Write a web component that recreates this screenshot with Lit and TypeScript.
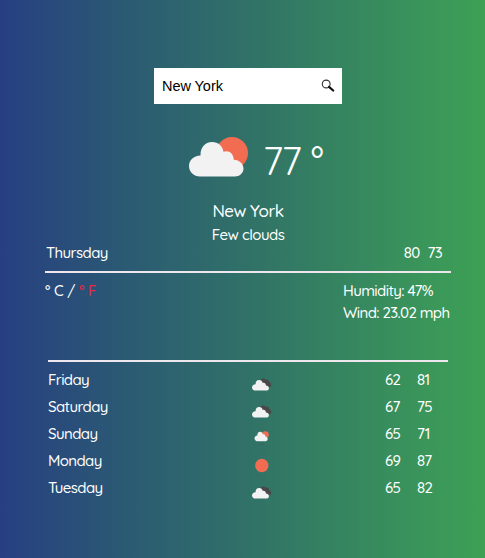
import { LitElement, html, css, svg } from "lit";
import { customElement, property } from "lit/decorators.js";

type Sky = "clouds" | "showers" | "clear" | "few";

const CLOUD =
  "M11 39.5C5 39.5 0 35 0 29C0 23.200 4.500 18.700 11.500 18.500C11.300 10.500 16 5 23 5C29.500 5 33.500 9 34.500 14.800C39.500 12.800 44.500 16 44.800 22.700C50.500 23 54.500 27 54.500 31.500C54.500 36 50.500 39.500 46 39.500Z";

@customElement("sky-icon")
export class SkyIcon extends LitElement {
  static styles = css`
    :host { display: block; }
    svg { display: block; width: 100%; height: 100%; overflow: visible; }
  `;
  @property() sky: Sky = "few";

  render() {
    const body = {
      few: svg`<circle cx="43" cy="16" r="16" fill="#f26c51"/><path d=${CLOUD} fill="#f2f2f2"/>`,
      clouds: svg`<path d="M26 7C29 1 38-1 43 5C50 2 54 7 54 12C60 13 62 20 60 27H40Z" fill="#484848"/><path d=${CLOUD} fill="#f2f2f2" transform="translate(0 1) scale(.98 .97)"/>`,
      showers: svg`<circle cx="42" cy="8" r="11" fill="#f26c51"/><path d=${CLOUD} fill="#f2f2f2" transform="translate(8 -6) scale(.76 .88)"/><path d="M20 33l2 2M28 33l2 2M36 33l2 2M24 39l2 2M32 39l2 2" stroke="#484848" stroke-width="2.500"/>`,
      clear: svg`<circle cx="31" cy="20" r="21" fill="#f26c51"/>`,
    }[this.sky];
    return html`<svg viewBox="0 0 60 40" aria-hidden="true">${body}</svg>`;
  }
}

const DAYS: { name: string; sky: Sky; low: number; high: number }[] = [
  { name: "Friday", sky: "clouds", low: 62, high: 81 },
  { name: "Saturday", sky: "clouds", low: 67, high: 75 },
  { name: "Sunday", sky: "showers", low: 65, high: 71 },
  { name: "Monday", sky: "clear", low: 69, high: 87 },
  { name: "Tuesday", sky: "clouds", low: 65, high: 82 },
];

@customElement("app-root")
export class AppRoot extends LitElement {
  static styles = css`
    :host {
      display: block;
      box-sizing: border-box;
      height: 558px;
      padding-top: 68px;
      overflow: hidden;
      color: #fff;
      font: 500 15px/22px Quicksand, Lato, sans-serif;
      letter-spacing: -0.600px;
      background: linear-gradient(90deg, #273f82 0%, #2b5a73 26%, #327765 57%, #3a965a 88%, #3da055 100%);
    }
    .search {
      display: flex;
      align-items: center;
      justify-content: space-between;
      box-sizing: border-box;
      width: 188px;
      height: 36px;
      margin-left: 154px;
      padding: 0 7px 0 8px;
      background: #fff;
      color: #000;
      font: 14.500px/36px "Liberation Sans", sans-serif;
      letter-spacing: -0.050px;
    }
    .search svg { width: 14px; height: 14px; }
    .now { display: flex; height: 40px; margin: 33px 0 0 189px; }
    .now sky-icon { width: 60px; height: 40px; }
    .temp { margin-left: 14px; font-size: 39px; line-height: 48px; font-weight: 400; letter-spacing: -1.300px; word-spacing: 1px; white-space: pre; }
    .place { width: 496px; margin-top: 22px; text-align: center; font-size: 17px; line-height: 24px; letter-spacing: -0.500px; }
    .desc { width: 496px; text-align: center; line-height: 24px; letter-spacing: -0.500px; }
    .today { display: flex; justify-content: space-between; margin: 0 34px 0 45px; padding: 0 9px 7px 1px; border-bottom: 2px solid #eee8ee; height: 17px; line-height: 11px; }
    .range { display: flex; gap: 8px; }
    .num { letter-spacing: -0.700px; }
    .details { display: flex; justify-content: space-between; margin: 7px 34px 0 45px; }
    .unit { letter-spacing: -0.500px; word-spacing: 0.500px; }
    .active { color: #f0243c; }
    .facts { width: 108px; white-space: nowrap; }
    .week { margin: 36px 37px 0 48px; padding-top: 4px; border-top: 2px solid #eee8ee; }
    .day { display: grid; grid-template-columns: 204px 133px 32px 1fr; height: 27px; line-height: 27px; }
    .day sky-icon { width: 19px; height: 13px; margin-top: 12px; }
  `;

  render() {
    return html`
      <div class="search">
        <span>New York</span>
        <svg viewBox="0 0 14 14" aria-hidden="true">
          <circle cx="5.200" cy="5" r="3.900" fill="#fff" stroke="#333" stroke-width="1.100"/>
          <path d="M8 7.900L12.200 11.500" stroke="#111" stroke-width="2.200" stroke-linecap="round"/>
        </svg>
      </div>
      <div class="now"><sky-icon sky="few"></sky-icon><span class="temp">77 °</span></div>
      <div class="place">New York</div>
      <div class="desc">Few clouds</div>
      <div class="today"><span>Thursday</span><span class="range num"><span>80</span><span>73</span></span></div>
      <div class="details">
        <span class="unit">° C / <span class="active">° F</span></span>
        <div class="facts">
          <div class="humidity">Humidity: 47%</div>
          <div class="wind">Wind: 23.02 mph</div>
        </div>
      </div>
      <div class="week">
        ${DAYS.map((d) => html`<div class="day">
          <span>${d.name}</span><sky-icon .sky=${d.sky}></sky-icon>
          <span class="num">${d.low}</span><span class="num">${d.high}</span>
        </div>`)}
      </div>
    `;
  }
}
